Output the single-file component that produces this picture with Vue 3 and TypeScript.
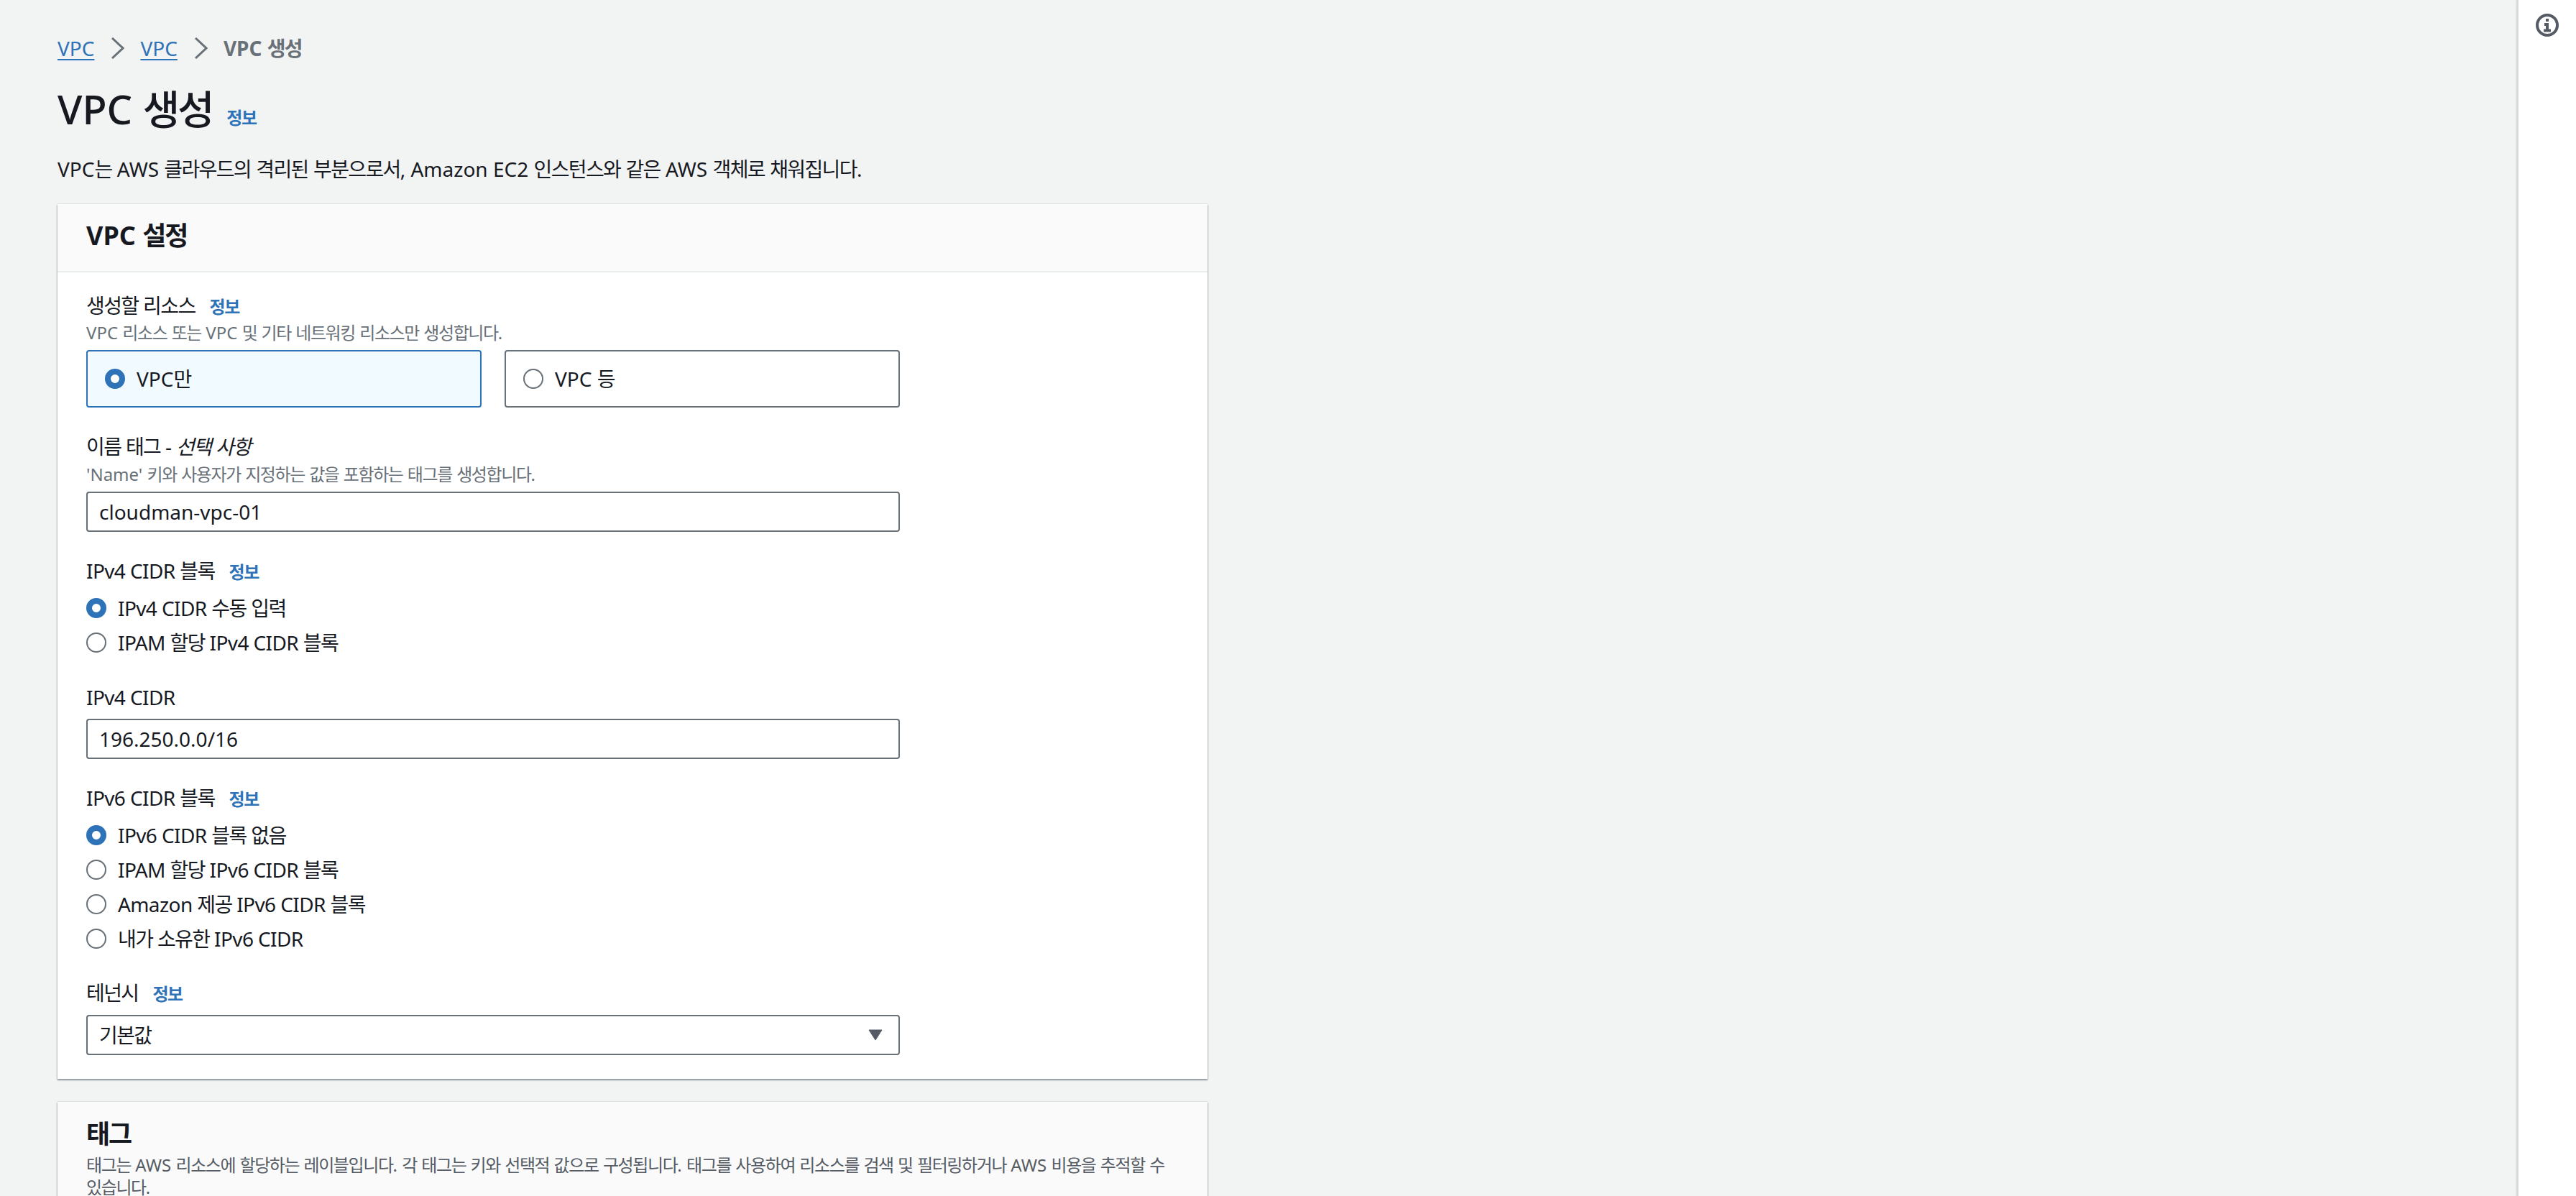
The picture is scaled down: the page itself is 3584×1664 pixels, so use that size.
<script setup lang="ts">
import { h, ref } from 'vue'

type RadioItem = {
  label: string
  checked: boolean
}

// hangul runs get a tighter tracking than latin runs
const Txt = (props: { text: string }) =>
  h(
    'span',
    props.text
      .split(/([\uAC00-\uD7A3]+)/)
      .filter((part) => part !== '')
      .map((part) => (/[\uAC00-\uD7A3]/.test(part) ? h('span', { class: 'ko' }, part) : part)),
  )

const resourceCards = ref<RadioItem[]>([
  { label: 'VPC만', checked: true },
  { label: 'VPC 등', checked: false },
])

const ipv4Options = ref<RadioItem[]>([
  { label: 'IPv4 CIDR 수동 입력', checked: true },
  { label: 'IPAM 할당 IPv4 CIDR 블록', checked: false },
])

const ipv6Options = ref<RadioItem[]>([
  { label: 'IPv6 CIDR 블록 없음', checked: true },
  { label: 'IPAM 할당 IPv6 CIDR 블록', checked: false },
  { label: 'Amazon 제공 IPv6 CIDR 블록', checked: false },
  { label: '내가 소유한 IPv6 CIDR', checked: false },
])
</script>

<template>
  <div class="page">
    <main class="content">
      <nav class="breadcrumb">
        <a class="crumb-link">VPC</a>
        <svg class="crumb-sep" viewBox="0 0 18 30"><path d="M1 1l15 14L1 29" /></svg>
        <a class="crumb-link">VPC</a>
        <svg class="crumb-sep" viewBox="0 0 18 30"><path d="M1 1l15 14L1 29" /></svg>
        <span class="crumb-current"><Txt text="VPC 생성" /></span>
      </nav>

      <div class="title-row">
        <h1><Txt text="VPC 생성" /></h1>
        <a class="info title-info"><Txt text="정보" /></a>
      </div>
      <p class="lead"><Txt text="VPC는 AWS 클라우드의 격리된 부분으로서, Amazon EC2 인스턴스와 같은 AWS 객체로 채워집니다." /></p>

      <section class="panel">
        <header class="panel-head">
          <h2><Txt text="VPC 설정" /></h2>
        </header>
        <div class="panel-body">
          <div class="field field-resource">
            <div class="label"><Txt text="생성할 리소스" /><a class="info"><Txt text="정보" /></a></div>
            <div class="hint"><Txt text="VPC 리소스 또는 VPC 및 기타 네트워킹 리소스만 생성합니다." /></div>
            <div class="cards">
              <div v-for="card in resourceCards" :key="card.label" class="card" :class="{ selected: card.checked }">
                <span class="radio" :class="{ on: card.checked }"></span>
                <Txt :text="card.label" />
              </div>
            </div>
          </div>

          <div class="field field-name">
            <div class="label"><Txt text="이름 태그 - " /><i><Txt text="선택 사항" /></i></div>
            <div class="hint"><Txt text="'Name' 키와 사용자가 지정하는 값을 포함하는 태그를 생성합니다." /></div>
            <div class="input">cloudman-vpc-01</div>
          </div>

          <div class="field field-v4">
            <div class="label"><Txt text="IPv4 CIDR 블록" /><a class="info"><Txt text="정보" /></a></div>
            <div class="radio-list">
              <div v-for="opt in ipv4Options" :key="opt.label" class="radio-row">
                <span class="radio" :class="{ on: opt.checked }"></span>
                <Txt :text="opt.label" />
              </div>
            </div>
          </div>

          <div class="field field-cidr">
            <div class="label">IPv4 CIDR</div>
            <div class="input input-cidr">196.250.0.0/16</div>
          </div>

          <div class="field field-v6">
            <div class="label"><Txt text="IPv6 CIDR 블록" /><a class="info"><Txt text="정보" /></a></div>
            <div class="radio-list">
              <div v-for="opt in ipv6Options" :key="opt.label" class="radio-row">
                <span class="radio" :class="{ on: opt.checked }"></span>
                <Txt :text="opt.label" />
              </div>
            </div>
          </div>

          <div class="field field-tenancy">
            <div class="label"><Txt text="테넌시" /><a class="info"><Txt text="정보" /></a></div>
            <div class="input select">
              <Txt text="기본값" />
              <svg class="caret" viewBox="0 0 20 16"><path d="M1 1h18L10 15z" /></svg>
            </div>
          </div>
        </div>
      </section>

      <section class="panel panel-tags">
        <header class="panel-head tags-head">
          <h2><Txt text="태그" /></h2>
          <p class="tags-desc"><Txt text="태그는 AWS 리소스에 할당하는 레이블입니다. 각 태그는 키와 선택적 값으로 구성됩니다. 태그를 사용하여 리소스를 검색 및 필터링하거나 AWS 비용을 추적할 수 있습니다." /></p>
        </header>
      </section>
    </main>

    <aside class="side">
      <svg class="side-icon" viewBox="0 0 32 32">
        <circle cx="16" cy="16" r="14" />
        <rect x="14" y="7" width="4" height="4" class="fill" />
        <path d="M12 15h4v8M11 23.5h10" />
      </svg>
    </aside>
  </div>
</template>

<style>
html,
body {
  margin: 0;
  overflow: hidden;
}
.ko {
  letter-spacing: -0.058em;
}
</style>

<style scoped>
.page {
  display: flex;
  width: 3584px;
  height: 1664px;
  overflow: hidden;
  background: #f2f3f3;
  color: #16191f;
  font-family: 'Noto Sans', 'Noto Sans CJK KR', sans-serif;
  font-size: 28px;
  line-height: 40px;
}
.content {
  flex: 1;
  min-width: 0;
  padding: 47px 0 0 80px;
}
.side {
  box-sizing: border-box;
  width: 82px;
  flex: none;
  background: #fff;
  border-left: 2px solid #d5dbdb;
  box-shadow: -1px 0 2px rgba(0, 28, 36, 0.15);
  padding: 19px 0 0 24px;
}
.side-icon {
  display: block;
  width: 32px;
  height: 32px;
  fill: none;
  stroke: #545b64;
  stroke-width: 4;
}
.side-icon .fill {
  fill: #545b64;
  stroke: none;
}
.breadcrumb {
  display: flex;
  align-items: center;
  height: 40px;
  font-size: 28px;
}
.crumb-link {
  color: #2e72b8;
  text-decoration: underline;
  text-decoration-thickness: 2px;
  text-underline-offset: 4px;
}
.crumb-sep {
  width: 18px;
  height: 30px;
  margin: 0 22px 0 24px;
  fill: none;
  stroke: #687078;
  stroke-width: 3;
}
.crumb-current {
  color: #687078;
  font-weight: 700;
}
.title-row {
  display: flex;
  align-items: baseline;
  gap: 20px;
  margin-top: 30px;
  height: 68px;
}
h1 {
  margin: 0;
  font-size: 56px;
  line-height: 68px;
  font-weight: 500;
}
.info {
  margin-left: 20px;
  color: #2e72b8;
  font-size: 24px;
  font-weight: 700;
  line-height: 1;
}
.title-info {
  margin-left: 0;
}
.lead {
  margin: 30px 0 29px;
  height: 40px;
  line-height: 40px;
}
.panel {
  width: 1600px;
  background: #fff;
  box-shadow: 0 2px 2px rgba(0, 28, 36, 0.3), 1px 1px 2px rgba(0, 28, 36, 0.15), -1px 1px 2px rgba(0, 28, 36, 0.15), 0 -1px 1px rgba(0, 28, 36, 0.06);
}
.panel-head {
  height: 95px;
  box-sizing: border-box;
  padding: 20px 40px 0;
  background: #fafafa;
  border-bottom: 2px solid #eaeded;
}
h2 {
  margin: 0;
  font-size: 36px;
  line-height: 48px;
  font-weight: 700;
}
.panel-body {
  padding: 26px 40px 33px;
}
.label {
  height: 40px;
  line-height: 40px;
  letter-spacing: -0.6px;
}
.label i {
  font-style: italic;
}
.hint {
  height: 36px;
  margin-top: 1px;
  color: #687078;
  font-size: 24px;
  line-height: 36px;
}
.field-resource .hint {
  margin-top: 0;
}
.cards {
  display: flex;
  gap: 32px;
  margin-top: 6px;
}
.card {
  display: flex;
  align-items: center;
  gap: 16px;
  box-sizing: border-box;
  width: 550px;
  height: 80px;
  padding: 0 24px;
  background: #fff;
  border: 2px solid #687078;
  border-radius: 4px;
}
.card.selected {
  background: #f1faff;
  border-color: #2e72b8;
}
.radio {
  box-sizing: border-box;
  flex: none;
  width: 28px;
  height: 28px;
  border: 2px solid #687078;
  border-radius: 50%;
  background: #fff;
}
.radio.on {
  border: 8.5px solid #2e72b8;
}
.input {
  box-sizing: border-box;
  display: flex;
  align-items: center;
  width: 1132px;
  height: 56px;
  margin-top: 6px;
  padding: 0 16px;
  background: #fff;
  border: 2px solid #687078;
  border-radius: 4px;
}
.field-name {
  margin-top: 34px;
}
.field-v4 {
  margin-top: 34px;
}
.field-cidr {
  margin-top: 36px;
}
.field-v6 {
  margin-top: 34px;
}
.field-tenancy {
  margin-top: 35px;
}
.input-cidr {
  margin-top: 10px;
}
.radio-list {
  display: flex;
  flex-direction: column;
  gap: 8px;
  margin-top: 12px;
}
.radio-row {
  display: flex;
  align-items: center;
  gap: 16px;
  height: 40px;
  letter-spacing: -0.6px;
}
.select {
  justify-content: space-between;
  margin-top: 11px;
}
.caret {
  width: 20px;
  height: 16px;
  margin-right: 6px;
  fill: #545b64;
  stroke: #545b64;
  stroke-width: 1;
  stroke-linejoin: round;
}
.panel-tags {
  margin-top: 32px;
}
.tags-head {
  height: 200px;
  padding-top: 21px;
  border-bottom: 0;
}
.tags-desc {
  margin: 3px 0 0;
  color: #545b64;
  font-size: 24px;
  line-height: 31px;
}
</style>
